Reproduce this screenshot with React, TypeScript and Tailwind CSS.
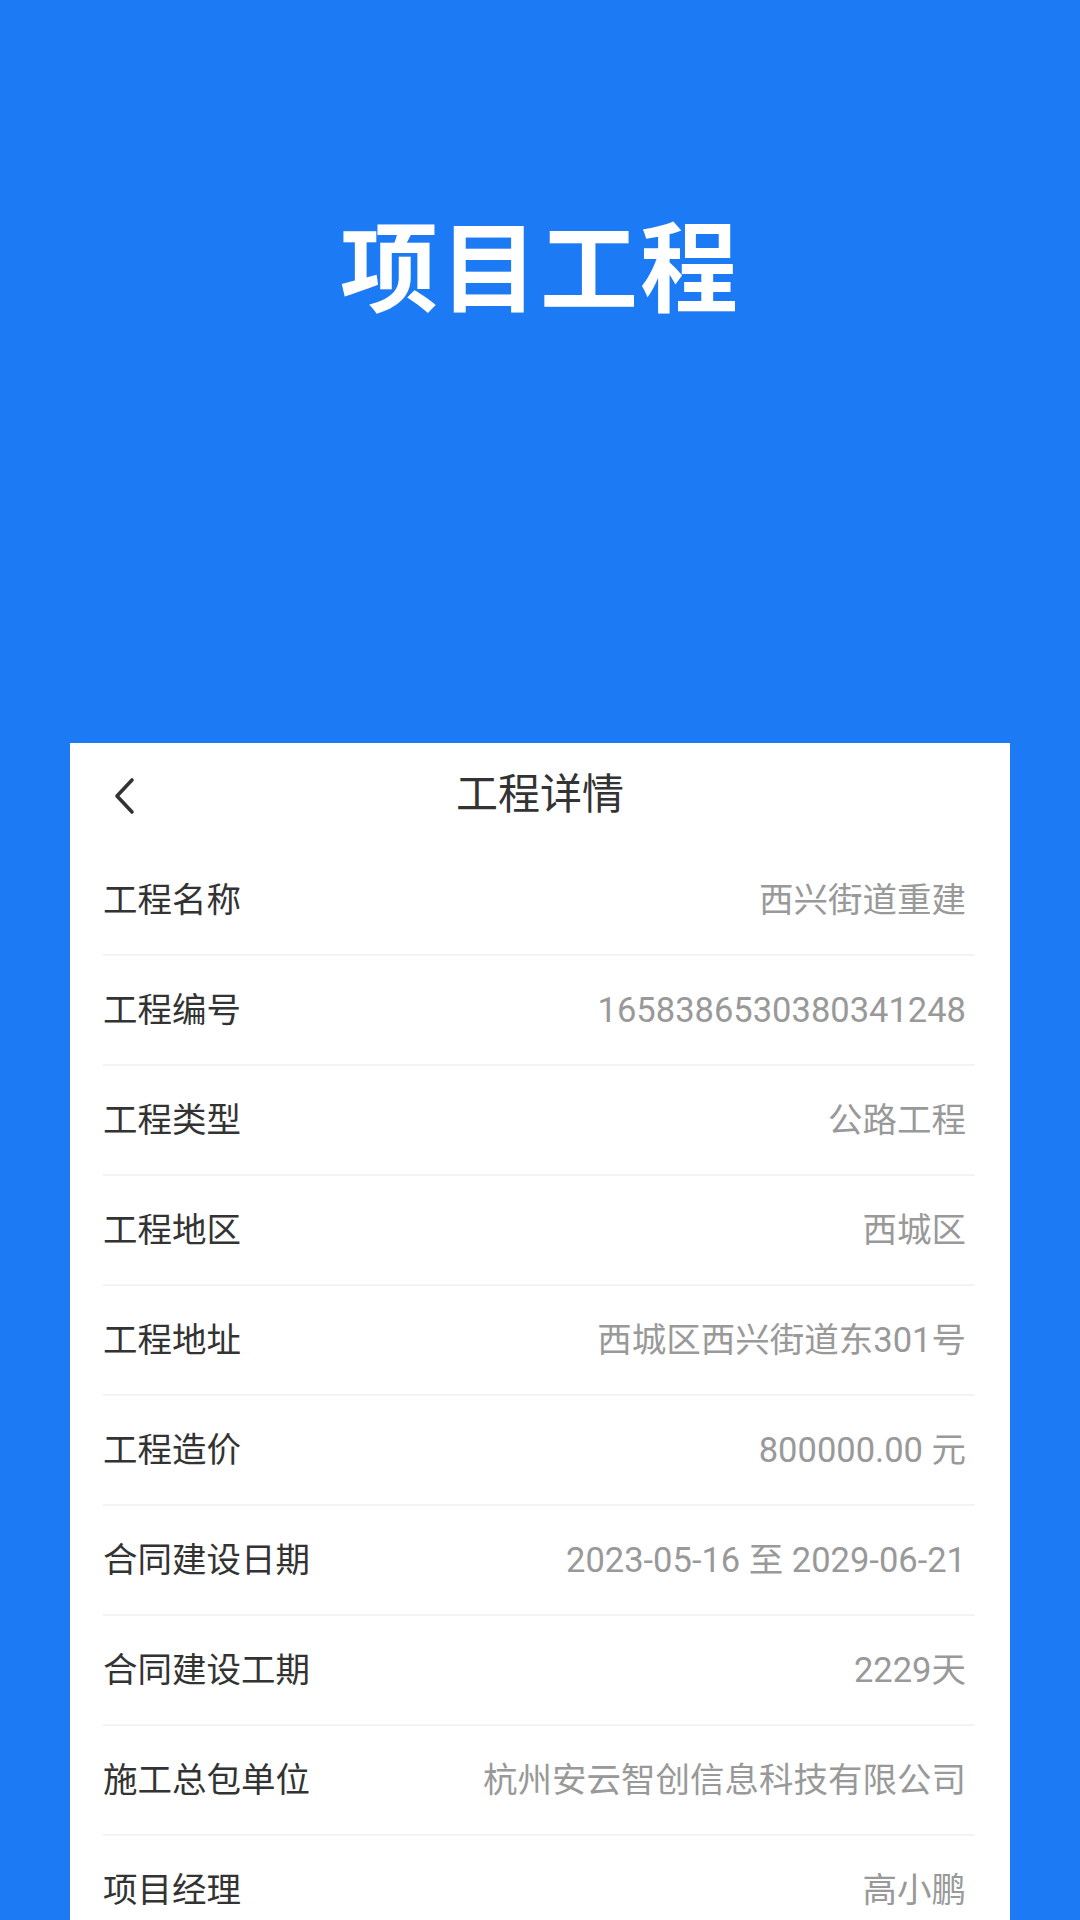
const ROWS = [
  { label: "工程名称", value: "西兴街道重建" },
  { label: "工程编号", value: "1658386530380341248" },
  { label: "工程类型", value: "公路工程" },
  { label: "工程地区", value: "西城区" },
  { label: "工程地址", value: "西城区西兴街道东301号" },
  { label: "工程造价", value: "800000.00 元" },
  { label: "合同建设日期", value: "2023-05-16 至 2029-06-21" },
  { label: "合同建设工期", value: "2229天" },
  { label: "施工总包单位", value: "杭州安云智创信息科技有限公司" },
  { label: "项目经理", value: "高小鹏" },
  { label: "项目联系电话", value: "13800000000" },
];

export default function App() {
  return (
    <div
      className="h-[1920px] w-[1080px] overflow-hidden bg-[#1b7af4]"
      style={{ fontFamily: 'Roboto, "Noto Sans CJK SC", sans-serif' }}
    >
      {/* Banner title */}
      <div className="pt-[222px] flex justify-center">
        <h1 className="text-[98px] leading-none font-semibold text-white tracking-[2px]">项目工程</h1>
      </div>

      {/* Detail card */}
      <div className="mt-[423px] mx-[70px] bg-white">
        <div className="relative h-[103px] flex items-center justify-center">
          <button className="absolute left-[40px] top-[34px] text-[#333]" aria-label="返回">
            <svg width="30" height="38" viewBox="0 0 30 38" fill="none">
              <polyline
                points="22,3 7,19 22,35"
                stroke="#333333"
                strokeWidth="3.6"
                strokeLinecap="round"
                strokeLinejoin="round"
              />
            </svg>
          </button>
          <span className="text-[42px] text-[#333] leading-none">工程详情</span>
        </div>

        <div className="pl-[33px] pr-[35px]">
          {ROWS.map(({ label, value }) => (
            <div
              key={label}
              className="h-[110px] flex items-center justify-between border-b-2 border-[#f3f3f3]"
            >
              <span className="text-[34.5px] text-[#333] leading-none">{label}</span>
              <span className="text-[34.5px] text-[#999] leading-none pr-[9px]">{value}</span>
            </div>
          ))}
        </div>
      </div>
    </div>
  );
}
